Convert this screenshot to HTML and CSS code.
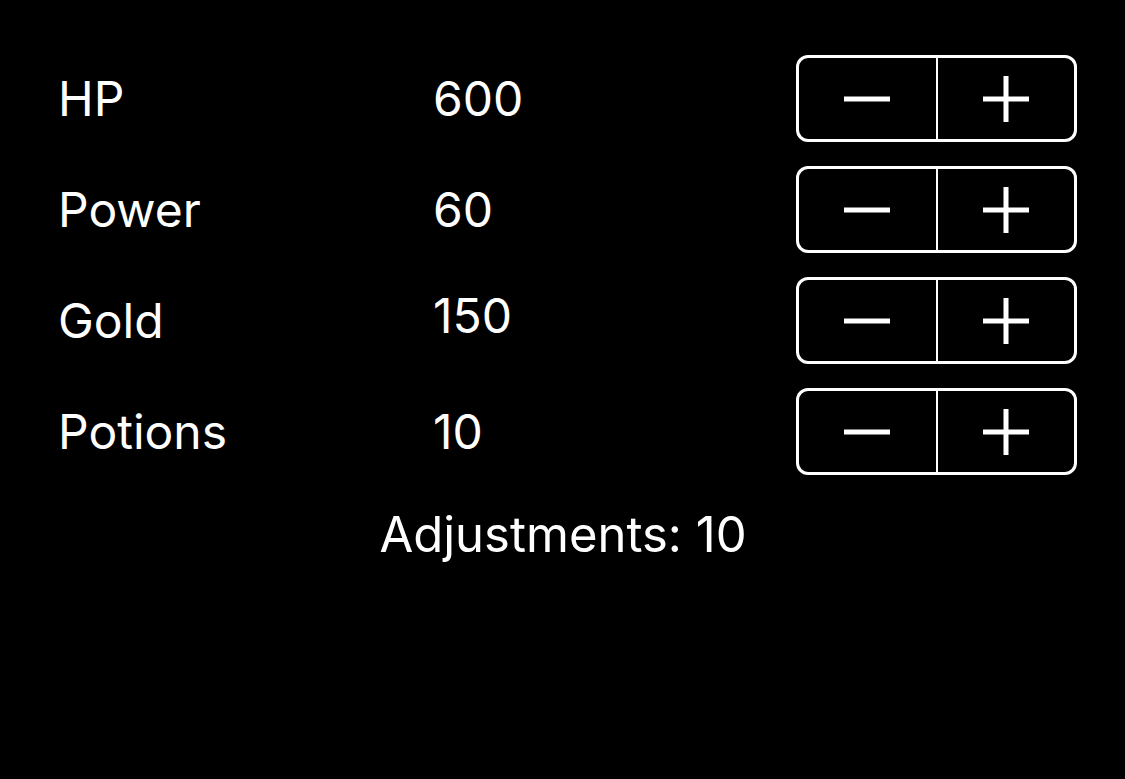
FILE: index.html
```html
<!DOCTYPE html>
<html lang="en">

<head>
    <meta charset="UTF-8">
    <meta name="viewport" content="width=device-width, initial-scale=1.0">
    <title>Stats</title>
    <link rel="stylesheet" href="styles.css">
</head>

<body>
    <div class="stats">
        <div class="stat-row">
            <span class="stat-label">HP</span>
            <span class="stat-value">600</span>
            <div class="stepper">
                <button class="step-btn" aria-label="Decrement">
                    <svg width="46" height="46" viewBox="0 0 46 46"><rect x="0" y="20.5" width="46" height="5" fill="#fff"/></svg>
                </button>
                <button class="step-btn" aria-label="Increment">
                    <svg width="46" height="46" viewBox="0 0 46 46"><rect x="0" y="20.5" width="46" height="5" fill="#fff"/><rect x="20.5" y="0" width="5" height="46" fill="#fff"/></svg>
                </button>
            </div>
        </div>
        <div class="stat-row">
            <span class="stat-label">Power</span>
            <span class="stat-value">60</span>
            <div class="stepper">
                <button class="step-btn" aria-label="Decrement">
                    <svg width="46" height="46" viewBox="0 0 46 46"><rect x="0" y="20.5" width="46" height="5" fill="#fff"/></svg>
                </button>
                <button class="step-btn" aria-label="Increment">
                    <svg width="46" height="46" viewBox="0 0 46 46"><rect x="0" y="20.5" width="46" height="5" fill="#fff"/><rect x="20.5" y="0" width="5" height="46" fill="#fff"/></svg>
                </button>
            </div>
        </div>
        <div class="stat-row">
            <span class="stat-label">Gold</span>
            <span class="stat-value stat-value-raised">150</span>
            <div class="stepper">
                <button class="step-btn" aria-label="Decrement">
                    <svg width="46" height="46" viewBox="0 0 46 46"><rect x="0" y="20.5" width="46" height="5" fill="#fff"/></svg>
                </button>
                <button class="step-btn" aria-label="Increment">
                    <svg width="46" height="46" viewBox="0 0 46 46"><rect x="0" y="20.5" width="46" height="5" fill="#fff"/><rect x="20.5" y="0" width="5" height="46" fill="#fff"/></svg>
                </button>
            </div>
        </div>
        <div class="stat-row">
            <span class="stat-label">Potions</span>
            <span class="stat-value">10</span>
            <div class="stepper">
                <button class="step-btn" aria-label="Decrement">
                    <svg width="46" height="46" viewBox="0 0 46 46"><rect x="0" y="20.5" width="46" height="5" fill="#fff"/></svg>
                </button>
                <button class="step-btn" aria-label="Increment">
                    <svg width="46" height="46" viewBox="0 0 46 46"><rect x="0" y="20.5" width="46" height="5" fill="#fff"/><rect x="20.5" y="0" width="5" height="46" fill="#fff"/></svg>
                </button>
            </div>
        </div>

        <p class="adjustments">Adjustments: 10</p>
    </div>
</body>

</html>
```

FILE: styles.css
```css
body {
    margin: 0;
    background-color: #000;
    color: #FFF;
    font-family: Inter, "Noto Sans", sans-serif;
    min-height: 100vh;
}

.stats {
    padding: 55px 48px 0 58px;
    display: flex;
    flex-direction: column;
    gap: 24px;
}

.stat-row {
    display: grid;
    grid-template-columns: 375px 1fr 281px;
    align-items: center;
    height: 87px;
}

.stat-label,
.stat-value {
    font-size: 48px;
    line-height: 1;
}

.stat-value-raised {
    margin-bottom: 10px;
}

.stepper {
    display: flex;
    height: 87px;
    border: 3px solid #FFF;
    border-radius: 12px;
    box-sizing: border-box;
}

.step-btn {
    flex: 1;
    display: flex;
    align-items: center;
    justify-content: center;
    background: none;
    border: none;
    padding: 0;
    color: #FFF;
    cursor: pointer;
}

.step-btn + .step-btn {
    border-left: 2px solid #FFF;
}

.adjustments {
    margin: 6px 0 0 -9px;
    text-align: center;
    font-size: 49px;
}
```
